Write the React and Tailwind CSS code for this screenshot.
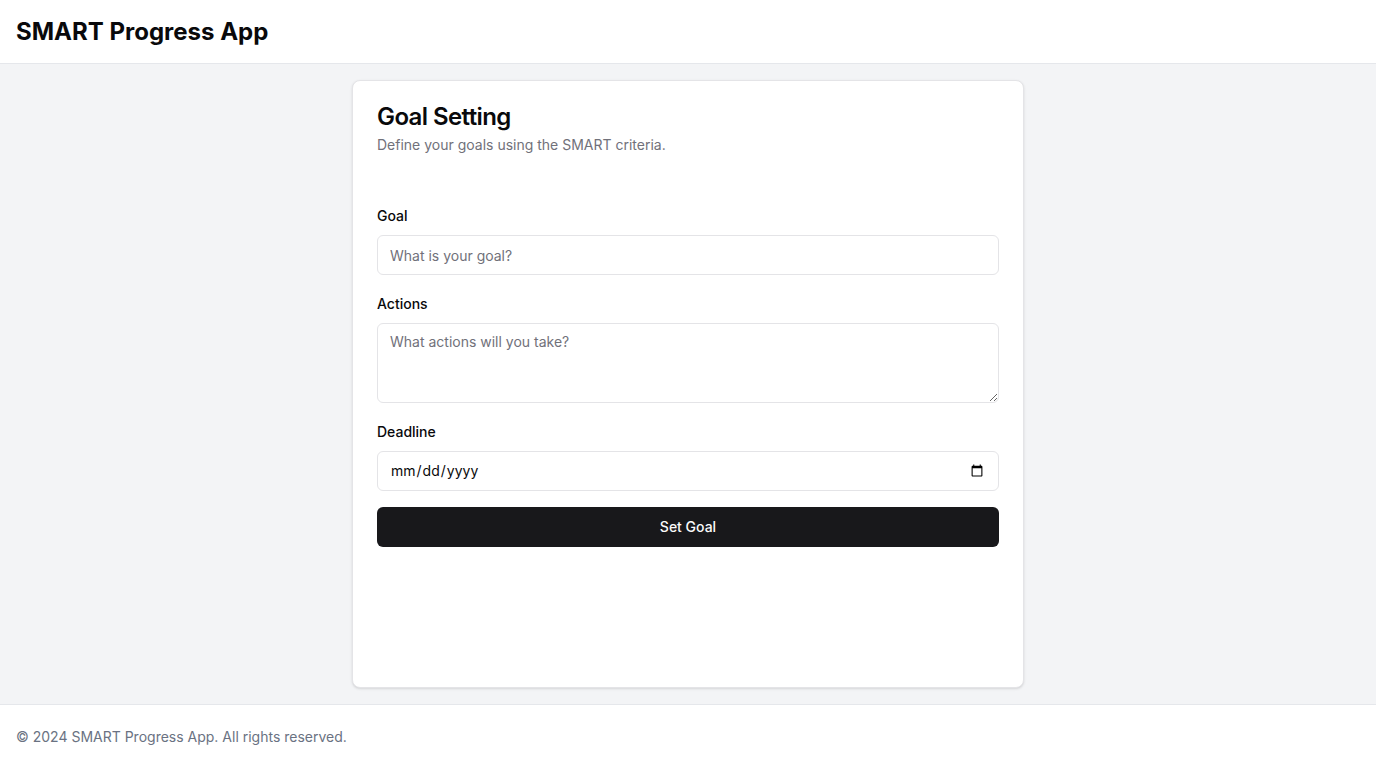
export default function App() {
  return (
    <div className="min-h-screen flex flex-col bg-gray-100 font-['Inter',sans-serif] text-[#09090b]">
      <header className="h-16 flex items-center px-4 bg-white border-b border-gray-200">
        <h1 className="text-2xl font-bold">SMART Progress App</h1>
      </header>
      <main className="flex-1 flex justify-center py-4 px-4">
        <div className="w-full max-w-2xl bg-white border border-[#e4e4e7] rounded-lg shadow-sm">
          <div className="p-6 flex flex-col gap-1.5">
            <h2 className="text-2xl font-semibold leading-none tracking-tight">Goal Setting</h2>
            <p className="text-sm text-[#71717a]">Define your goals using the SMART criteria.</p>
          </div>
          <div className="p-6">
            <form className="flex flex-col gap-4" onSubmit={(e) => e.preventDefault()}>
              <div className="flex flex-col gap-2">
                <label htmlFor="goal" className="block h-6 pt-[2px] leading-[22px] text-sm font-medium">Goal</label>
                <input
                  id="goal"
                  placeholder="What is your goal?"
                  className="block h-10 w-full rounded-md border border-[#e4e4e7] bg-white px-3 py-2 text-sm placeholder:text-[#71717a] outline-none"
                />
              </div>
              <div className="flex flex-col gap-2">
                <label htmlFor="actions" className="block h-6 pt-[2px] leading-[22px] text-sm font-medium">Actions</label>
                <textarea
                  id="actions"
                  placeholder="What actions will you take?"
                  className="block min-h-[80px] h-20 w-full rounded-md border border-[#e4e4e7] bg-white px-3 py-2 text-sm placeholder:text-[#71717a] outline-none"
                />
              </div>
              <div className="flex flex-col gap-2">
                <label htmlFor="deadline" className="block h-6 pt-[2px] leading-[22px] text-sm font-medium">Deadline</label>
                <input
                  id="deadline"
                  type="date"
                  className="block h-10 w-full rounded-md border border-[#e4e4e7] bg-white px-3 py-2 text-sm outline-none"
                />
              </div>
              <button
                type="submit"
                className="flex items-center justify-center h-10 w-full rounded-md bg-[#18181b] px-4 py-2 text-sm font-medium text-[#fafafa]"
              >
                Set Goal
              </button>
            </form>
          </div>
        </div>
      </main>
      <footer className="h-16 flex items-center px-4 bg-white border-t border-gray-200">
        <p className="text-sm text-gray-500">© 2024 SMART Progress App. All rights reserved.</p>
      </footer>
    </div>
  );
}
